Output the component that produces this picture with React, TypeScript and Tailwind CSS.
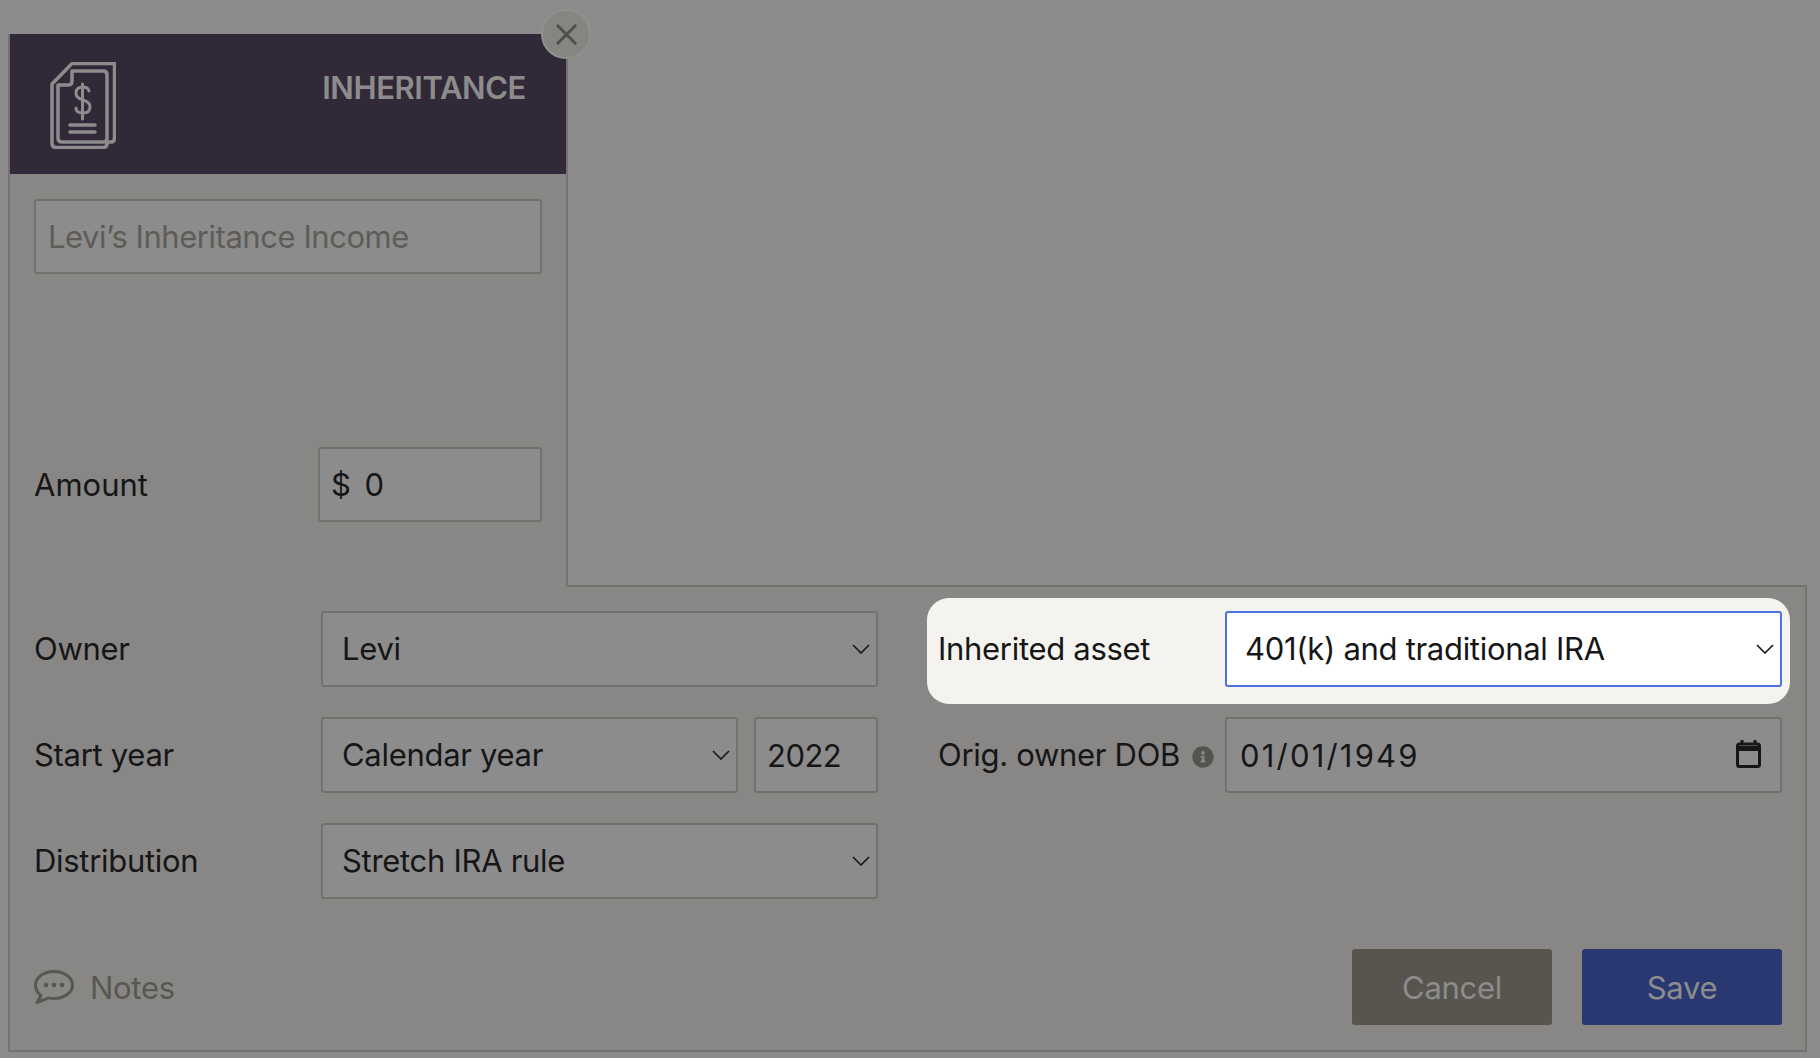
import { FaInfoCircle } from "react-icons/fa";

const fieldClass =
  "h-full w-full rounded-[3px] border-2 border-[#72716d] bg-[#8c8c8c] text-[#161616] outline-none";

const Chevron = ({ className }: { className: string }) => (
  <svg viewBox="0 0 18 10" className={className} fill="none" stroke="#161616" strokeWidth="1.6">
    <path d="M1 1l8 8 8-8" />
  </svg>
);

const Select = ({ value, className }: { value: string; className: string }) => (
  <div className={`relative h-[76px] ${className}`}>
    <select
      defaultValue={value}
      className={`${fieldClass} appearance-none pl-[19px]`}
    >
      <option>{value}</option>
    </select>
    <Chevron className="pointer-events-none absolute right-[8px] top-[33px] h-[10px] w-[18px]" />
  </div>
);

const Row = ({ label, children }: { label: string; children: React.ReactNode }) => (
  <div className="flex h-[76px] items-center">
    <span className="w-[287px] shrink-0 text-[#161616]">{label}</span>
    {children}
  </div>
);

const HeaderIcon = () => (
  <svg viewBox="0 0 66 87" className="h-[87px] w-[66px]" fill="none" stroke="#8c8c8c" strokeWidth="3.500" strokeLinecap="round" strokeLinejoin="round">
    <path d="M65 1.500H22L2 22v59q0 4.500 4 4.500h47q4 0 4-4" />
    <path d="M64.500 2v74q0 4-4 4h-3" />
    <path d="M8 23h10q4 0 4-4V9h31q4 0 4 4v63q0 4-4 4H12q-4 0-4-4z" />
    <path d="M32.500 22v35M39 29q-1-4-6-4-7 0-7 6 0 5 7 7t7 7q0 6-7 6t-7-5" strokeWidth="3" />
    <path d="M20 63h25M20 70h25" />
  </svg>
);

const NotesIcon = () => (
  <svg viewBox="0 0 40 34" className="h-[34px] w-[40px]" fill="none" stroke="#595752" strokeWidth="3" strokeLinejoin="round">
    <path d="M20 1.500c10.500 0 18.500 6 18.500 13.500S30.500 28.500 20 28.500c-2 0-4-.2-5.500-.6L3 32.500l4-7C3.500 23 1.500 19.300 1.500 15 1.500 7.500 9.500 1.500 20 1.500z" />
    <circle cx="12" cy="15" r="2.300" fill="#595752" stroke="none" />
    <circle cx="20" cy="15" r="2.300" fill="#595752" stroke="none" />
    <circle cx="28" cy="15" r="2.300" fill="#595752" stroke="none" />
  </svg>
);

const CalendarIcon = ({ className }: { className: string }) => (
  <svg viewBox="0 0 25 28" className={className} fill="none" stroke="#161616" strokeWidth="3">
    <rect x="1.500" y="4" width="22" height="22.500" rx="2" />
    <path d="M1.500 8.500h22" strokeWidth="5" />
    <path d="M6 0v4M19 0v4" strokeWidth="3" />
  </svg>
);

const App = () => {
  return (
    <div className="h-[1058px] w-[1820px] overflow-hidden bg-[#8c8c8c] pl-[8px] pt-[34px] font-['Inter',sans-serif] text-[31px] tracking-[-0.3px]">
      <div className="relative z-10 -mb-[2px] h-[553px] w-[560px] border-x-2 border-[#75736e] bg-[#888785]">
        <div className="flex h-[140px] justify-between bg-[#322938] pl-[40px] pr-[40px] pt-[28px]">
          <HeaderIcon />
          <span className="mt-[8px] font-semibold leading-[36px] tracking-[-0.4px] text-[#8c8c8c]">INHERITANCE</span>
        </div>
        <div className="px-[24px] pt-[25px]">
          <input
            defaultValue="Levi’s Inheritance Income"
            className={`${fieldClass} !h-[75px] px-[12px] tracking-[-0.45px] !text-[#5f5c58]`}
          />
          <div className="mt-[173px] flex h-[75px] items-center">
            <span className="w-[284px] shrink-0 pt-[2px] tracking-normal text-[#161616]">Amount</span>
            <div className="flex h-full w-[224px] items-center gap-[14px] rounded-[3px] border-2 border-[#72716d] bg-[#8c8c8c] px-[11px] pt-[2px] text-[#161616]">
              <span>$</span>
              <span>0</span>
            </div>
          </div>
        </div>
        <button className="absolute -right-[25px] -top-[25px] flex h-[50px] w-[50px] items-center justify-center rounded-full border-2 border-[#90908e] bg-[#858582]">
          <svg viewBox="0 0 22 22" className="h-[21px] w-[21px]" stroke="#4f4f4f" strokeWidth="3">
            <path d="M1 1l20 20M21 1L1 21" />
          </svg>
        </button>
      </div>

      <div className="h-[467px] w-[1799px] border-2 border-[#75736e] bg-[#888785] pl-[24px] pr-[15px] pt-[24px]">
        <div className="flex justify-between">
          <div className="flex w-[844px] flex-col gap-[30px]">
            <Row label="Owner">
              <Select value="Levi" className="w-[557px]" />
            </Row>
            <Row label="Start year">
              <div className="flex w-[557px] gap-[16px]">
                <Select value="Calendar year" className="w-[417px]" />
                <input defaultValue="2022" className={`${fieldClass} !h-[76px] !w-[124px] px-[11px] tracking-[-0.5px]`} />
              </div>
            </Row>
            <Row label="Distribution">
              <Select value="Stretch IRA rule" className="w-[557px]" />
            </Row>
          </div>
          <div className="flex w-[863px] flex-col gap-[30px]">
            <div className="-mb-[17px] -mt-[13px] flex items-center rounded-[22px] bg-[#f4f3ef] pb-[17px] pl-[11px] pr-[8px] pt-[13px]">
              <span className="w-[287px] shrink-0 text-[#161616]">Inherited asset</span>
              <div className="relative h-[76px] w-[557px]">
                <select
                  defaultValue="401(k) and traditional IRA"
                  className="h-full w-full appearance-none rounded-[3px] border-2 border-[#4d72e0] bg-white pl-[18px] text-[#161616] outline-none"
                >
                  <option>401(k) and traditional IRA</option>
                </select>
                <Chevron className="pointer-events-none absolute right-[8px] top-[33px] h-[10px] w-[18px]" />
              </div>
            </div>
            <div className="flex h-[76px] items-center pl-[11px] pr-[8px]">
              <div className="flex w-[287px] shrink-0 items-center gap-[12px] text-[#161616]">
                <span>Orig. owner DOB</span>
                <FaInfoCircle className="mt-[3px] text-[22px] text-[#55534f]" />
              </div>
              <div className="relative h-full w-[557px]">
                <input defaultValue="01/01/1949" className={`${fieldClass} px-[13px] tracking-[2.2px]`} />
                <CalendarIcon className="pointer-events-none absolute right-[21px] top-[23px] h-[28px] w-[25px]" />
              </div>
            </div>
          </div>
        </div>

        <div className="mt-[50px] flex items-center justify-between pr-[8px]">
          <div className="flex items-center gap-[16px] text-[#595752]">
            <NotesIcon />
            <span className="pt-[2px]">Notes</span>
          </div>
          <div className="flex gap-[30px]">
            <button className="h-[76px] w-[200px] rounded-[3px] bg-[#58554f] pt-[2px] text-[#8c8c8c]">Cancel</button>
            <button className="h-[76px] w-[200px] rounded-[3px] bg-[#2a3872] pt-[2px] text-[#8c8c8c]">Save</button>
          </div>
        </div>
      </div>
    </div>
  );
};

export default App;
